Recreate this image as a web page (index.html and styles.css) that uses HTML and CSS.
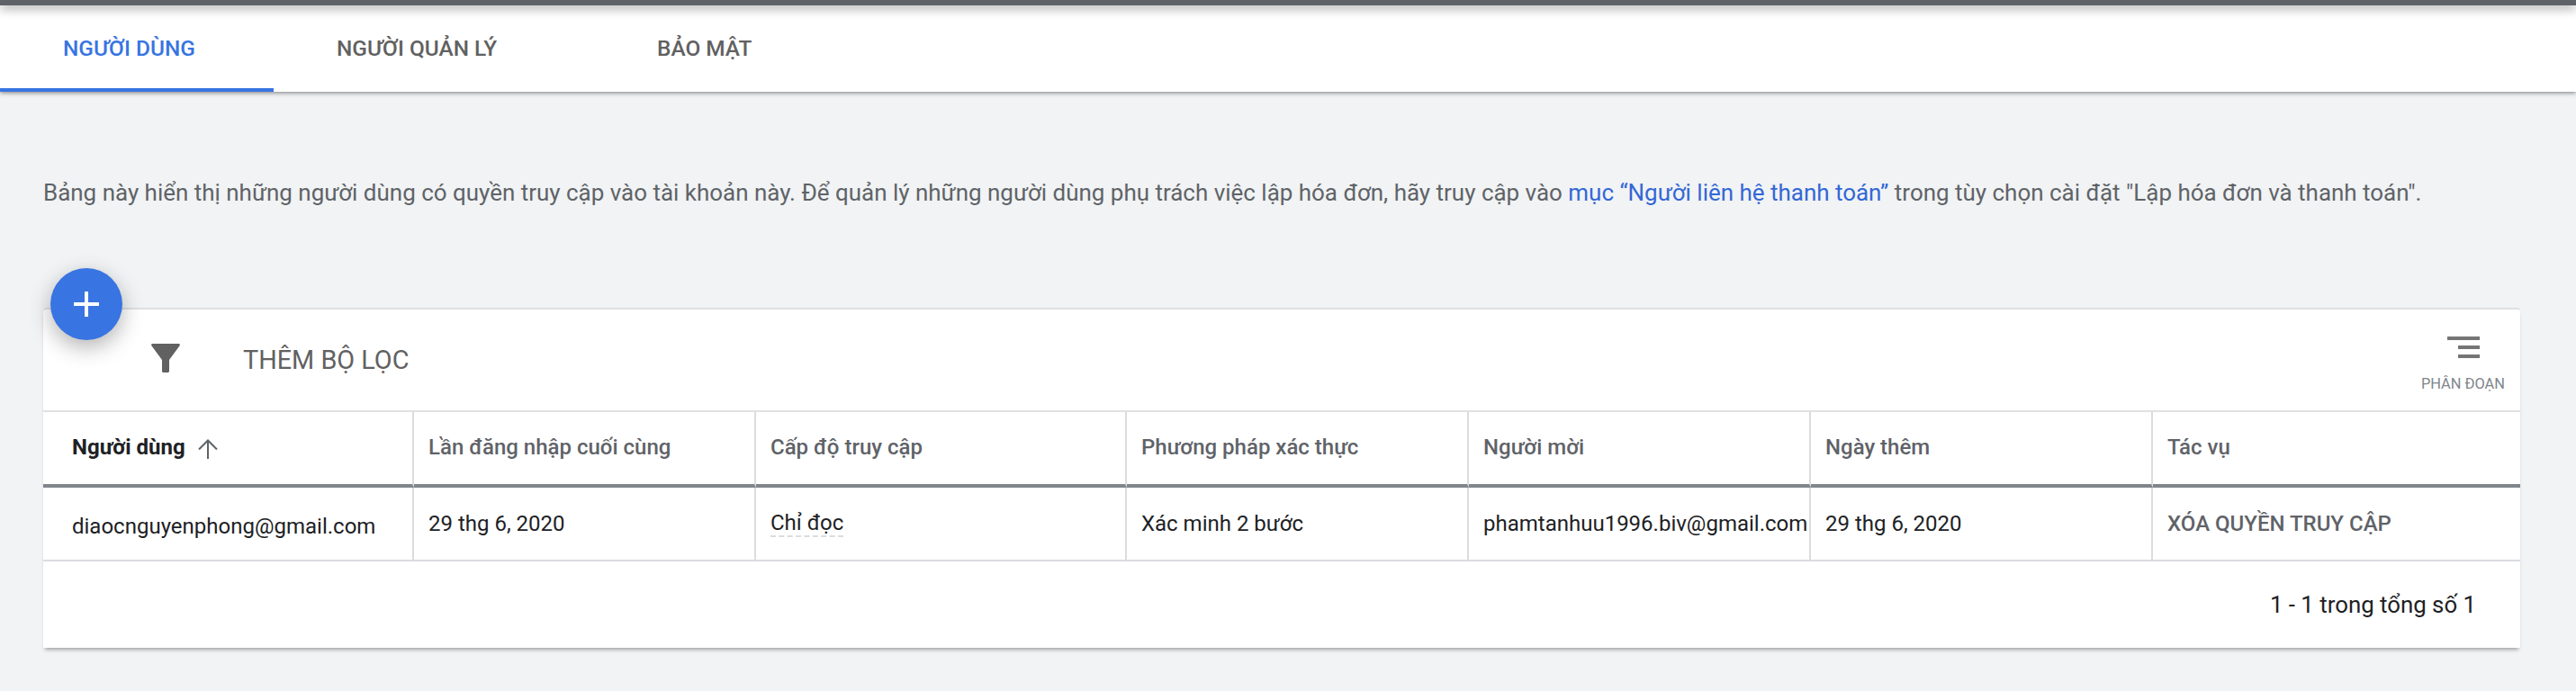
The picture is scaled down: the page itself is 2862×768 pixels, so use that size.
FILE: index.html
```html
<!DOCTYPE html>
<html lang="vi">
  <head>
    <title>Người dùng</title>
    <link rel="stylesheet" href="styles.css">
  </head>
  <body>
    <div class="top-bar"></div>
    <nav class="tabs">
      <a class="tab tab-users active" href="#">NGƯỜI DÙNG</a>
      <a class="tab tab-managers" href="#">NGƯỜI QUẢN LÝ</a>
      <a class="tab tab-security" href="#">BẢO MẬT</a>
    </nav>
    <main class="content">
      <p class="intro">Bảng này hiển thị những người dùng có quyền truy cập vào tài khoản này. Để quản lý những người dùng phụ trách việc lập hóa đơn, hãy truy cập vào <a href="#">mục “Người liên hệ thanh toán”</a> trong tùy chọn cài đặt "Lập hóa đơn và thanh toán".</p>
      <section class="card">
        <button class="fab" type="button">
          <svg width="28" height="28" viewBox="0 0 28 28"><path d="M12 0h4v12h12v4H16v12h-4V16H0v-4h12z" fill="#fff"/></svg>
        </button>
        <div class="toolbar">
          <svg class="filter-icon" width="32" height="32" viewBox="0 0 32 32"><path d="M1.500 0h29c1.200 0 1.800 1.300 1.100 2.200L20 18v12.500c0 .8-.7 1.500-1.500 1.500h-5c-.8 0-1.500-.7-1.500-1.500V18L.4 2.200C-.3 1.300.3 0 1.500 0z" fill="#616161"/></svg>
          <span class="add-filter">THÊM BỘ LỌC</span>
          <div class="segment">
            <svg width="36" height="24" viewBox="0 0 36 24"><path d="M0 0h36v4H0zM12 10h24v4H12zM12 20h24v4H12z" fill="#757575"/></svg>
            <span class="segment-label">PHÂN ĐOẠN</span>
          </div>
        </div>
        <table class="users">
          <colgroup>
            <col class="col-wide">
            <col class="col-narrow">
            <col class="col-wide">
            <col class="col-narrow">
            <col class="col-narrow">
            <col class="col-narrow">
            <col>
          </colgroup>
          <thead>
            <tr>
              <th class="first sorted">Người dùng <svg class="sort-icon" width="22" height="22" viewBox="0 0 22 22"><path d="M11 22V2M1 11.500L11 1.500l10 10" fill="none" stroke="#5f6368" stroke-width="2"/></svg></th>
              <th>Lần đăng nhập cuối cùng</th>
              <th>Cấp độ truy cập</th>
              <th>Phương pháp xác thực</th>
              <th>Người mời</th>
              <th>Ngày thêm</th>
              <th>Tác vụ</th>
            </tr>
          </thead>
          <tbody>
            <tr>
              <td class="first email">diaocnguyenphong@gmail.com</td>
              <td>29 thg 6, 2020</td>
              <td><span class="hint">Chỉ đọc</span></td>
              <td>Xác minh 2 bước</td>
              <td>phamtanhuu1996.biv@gmail.com</td>
              <td>29 thg 6, 2020</td>
              <td class="action">XÓA QUYỀN TRUY CẬP</td>
            </tr>
          </tbody>
        </table>
        <div class="pager">1 - 1 trong tổng số 1</div>
      </section>
    </main>
  </body>
</html>
```

FILE: styles.css
```css
html {
  font-family: Roboto, sans-serif;
}

body {
  margin: 0;
  height: 768px;
  overflow: hidden;
  background-color: #f1f3f4;
}

.top-bar {
  position: relative;
  z-index: 2;
  height: 6px;
  background-color: #5f6368;
  box-shadow: 0 3px 12px rgba(0, 0, 0, 0.45);
}

.tabs {
  display: flex;
  height: 96px;
  background-color: #fff;
  box-shadow: 0 1px 5px rgba(0, 0, 0, 0.5);
}

.tab {
  box-sizing: border-box;
  height: 96px;
  padding: 30px 0 0 70px;
  font-size: 24.4px;
  line-height: 36px;
  font-weight: 500;
  color: #616161;
  text-decoration: none;
}

.tab-users {
  width: 304px;
}

.tab-managers {
  width: 356px;
}

.tab.active {
  color: #3874e2;
  border-bottom: 4px solid #3874e2;
}

.content {
  padding: 0 62px 0 48px;
}

.intro {
  margin: 0;
  padding-top: 94px;
  font-size: 25.96px;
  line-height: 36px;
  color: #5f6368;
  white-space: nowrap;
}

.intro a {
  color: #3367d6;
  text-decoration: none;
}

.card {
  position: relative;
  margin-top: 110px;
  border-top: 2px solid #e0e0e0;
  border-radius: 4px 4px 0 0;
  background-color: #fff;
  box-shadow: 0 4px 4px -2px rgba(0, 0, 0, 0.35);
}

.fab {
  position: absolute;
  left: 8px;
  top: -46px;
  display: flex;
  align-items: center;
  justify-content: center;
  width: 80px;
  height: 80px;
  padding: 0;
  border: none;
  border-radius: 50%;
  background-color: #3874e2;
  box-shadow: 0 8px 24px rgba(0, 0, 0, 0.3);
}

.toolbar {
  display: flex;
  align-items: flex-start;
  height: 112px;
  border-bottom: 2px solid #e0e0e0;
}

.filter-icon {
  margin: 38px 0 0 120px;
}

.add-filter {
  margin: 36px 0 0 70px;
  font-size: 28.8px;
  line-height: 40px;
  color: #616161;
}

.segment {
  display: flex;
  flex-direction: column;
  align-items: flex-end;
  margin: 30px 17px 0 auto;
}

.segment svg {
  margin-right: 28px;
}

.segment-label {
  margin-top: 19px;
  font-size: 16.4px;
  line-height: 20px;
  color: #80868b;
}

.users {
  width: 100%;
  border-collapse: separate;
  border-spacing: 0;
  table-layout: fixed;
}

.col-wide {
  width: 412px;
}

.col-narrow {
  width: 380px;
}

.users th,
.users td {
  box-sizing: border-box;
  height: 84px;
  padding: 0 0 0 16px;
  border-right: 2px solid #dadce0;
  text-align: left;
  white-space: nowrap;
  overflow: hidden;
  font-size: 24px;
  font-weight: 400;
}

.users th:last-child,
.users td:last-child {
  border-right: none;
}

.users th {
  padding-bottom: 2px;
  border-bottom: 4px solid #80868b;
  color: #5f6368;
  font-weight: 500;
}

.users td {
  height: 82px;
  border-bottom: 2px solid #dadce0;
  color: #202124;
}

.users .first {
  padding-left: 32px;
}

.users .sorted {
  color: #202124;
  font-weight: 700;
}

.sort-icon {
  margin-left: 8px;
  vertical-align: -5px;
}

.users .email {
  padding-top: 6px;
}

.hint {
  display: inline-block;
  border-bottom: 2px dashed #dadce0;
}

.users .action {
  color: #5f6368;
  font-weight: 500;
}

.pager {
  height: 96px;
  padding-right: 49px;
  text-align: right;
  font-size: 25.8px;
  line-height: 96px;
  color: #202124;
}
```
